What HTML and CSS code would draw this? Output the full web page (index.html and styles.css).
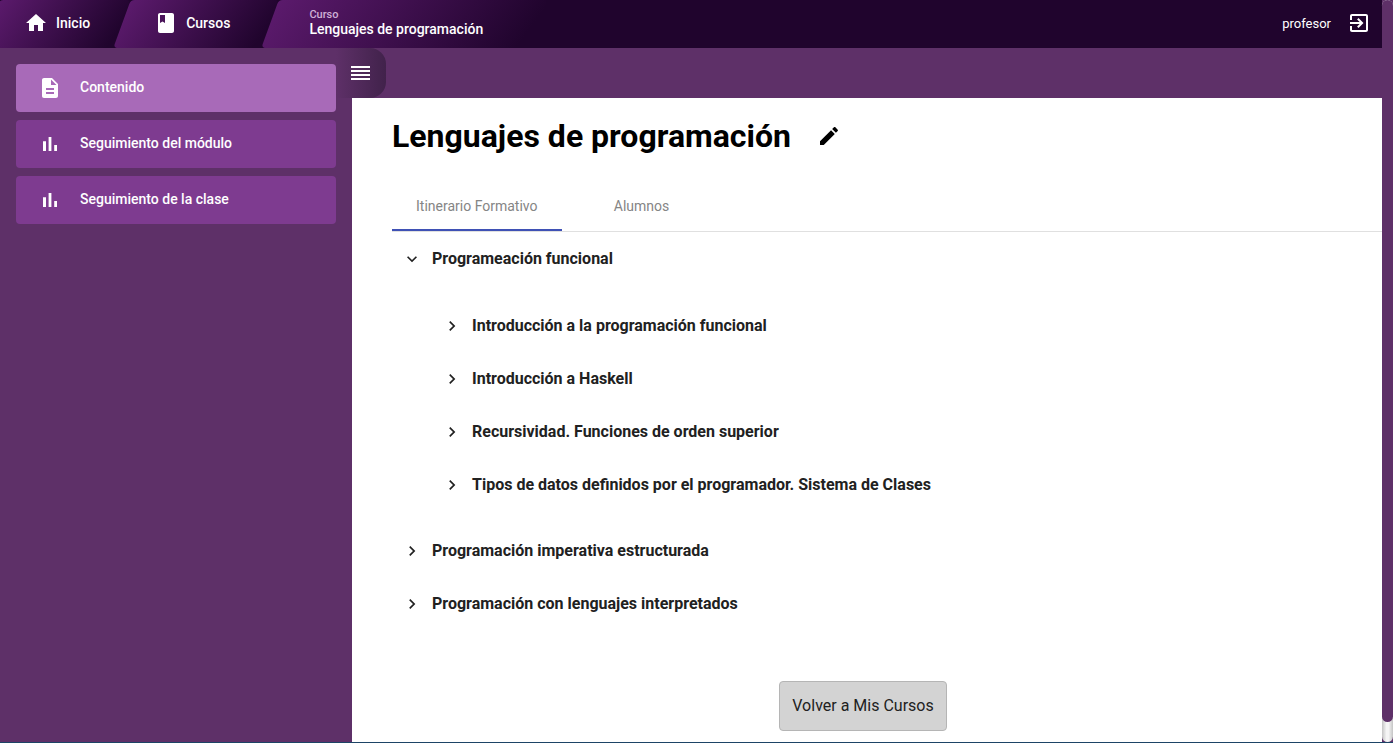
FILE: index.html
```html
<!DOCTYPE html>
<html lang="es">
<head>
<meta charset="utf-8">
<title>Lenguajes de programación</title>
<link rel="stylesheet" href="styles.css">
</head>
<body>
<div class="app">
  <header class="topbar">
    <nav class="crumbs" aria-label="Navegación principal">
      <a class="crumb crumb-home" href="#inicio">
        <svg class="icon" viewBox="0 0 24 24"><path d="M10 20v-6h4v6h5v-8h3L12 3 2 12h3v8z"/></svg>
        <span>Inicio</span>
      </a>
      <a class="crumb crumb-courses" href="#cursos">
        <svg class="icon" viewBox="0 0 24 24"><path d="M18 2H6c-1.100 0-2 .9-2 2v16c0 1.100.9 2 2 2h12c1.100 0 2-.9 2-2V4c0-1.100-.9-2-2-2zM6 4h5v8l-2.500-1.500L6 12V4z"/></svg>
        <span>Cursos</span>
      </a>
      <a class="crumb crumb-current" href="#curso">
        <span class="crumb-kind">Curso</span>
        <span>Lenguajes de programación</span>
      </a>
    </nav>
    <div class="user">
      <span>profesor</span>
      <button class="icon-button" type="button" aria-label="Cerrar sesión">
        <svg class="icon" viewBox="0 0 24 24"><path d="M10.090 15.590L11.500 17l5-5-5-5-1.410 1.410L12.670 11H3v2h9.670l-2.580 2.590zM19 3H5c-1.110 0-2 .9-2 2v4h2V5h14v14H5v-4H3v4c0 1.100.89 2 2 2h14c1.100 0 2-.9 2-2V5c0-1.100-.9-2-2-2z"/></svg>
      </button>
    </div>
  </header>

  <aside class="sidebar">
    <nav class="menu" aria-label="Secciones del curso">
      <a class="menu-item active" href="#contenido">
        <svg class="icon" viewBox="0 0 24 24"><path d="M14 2H6c-1.100 0-2 .9-2 2v16c0 1.100.89 2 2 2h12c1.100 0 2-.9 2-2V8l-6-6zm2 16H8v-2h8v2zm0-4H8v-2h8v2zm-3-5V3.500L18.500 9H13z"/></svg>
        <span>Contenido</span>
      </a>
      <a class="menu-item" href="#modulo">
        <svg class="icon" viewBox="0 0 24 24"><path d="M5 9.200h3V19H5zM10.600 5h2.800v14h-2.800zm5.600 8H19v6h-2.800z"/></svg>
        <span>Seguimiento del módulo</span>
      </a>
      <a class="menu-item" href="#clase">
        <svg class="icon" viewBox="0 0 24 24"><path d="M5 9.200h3V19H5zM10.600 5h2.800v14h-2.800zm5.600 8H19v6h-2.800z"/></svg>
        <span>Seguimiento de la clase</span>
      </a>
    </nav>
    <button class="toggle" type="button" aria-label="Ocultar menú">
      <svg class="toggle-icon" viewBox="0 0 20 14"><path d="M0 0h19v2H0zM0 4h19v2H0zM0 8h19v2H0zM0 12h19v2H0z"/></svg>
    </button>
  </aside>

  <main class="content">
    <div class="heading">
      <h1>Lenguajes de programación</h1>
      <button class="icon-button" type="button" aria-label="Editar título">
        <svg class="icon" viewBox="0 0 24 24"><path d="M3 17.250V21h3.750L17.810 9.940l-3.750-3.750L3 17.250zM20.710 7.040c.39-.39.39-1.020 0-1.410l-2.340-2.340c-.39-.39-1.020-.39-1.410 0l-1.830 1.830 3.750 3.750 1.830-1.830z"/></svg>
      </button>
    </div>
    <div class="tabs" role="tablist">
      <button class="tab selected" type="button" role="tab" aria-selected="true">Itinerario Formativo</button>
      <button class="tab" type="button" role="tab" aria-selected="false">Alumnos</button>
    </div>
    <ul class="tree">
      <li>
        <button class="node" type="button" aria-expanded="true"><svg class="chevron" viewBox="0 0 24 24"><path d="M16.590 8.590L12 13.170 7.410 8.590 6 10l6 6 6-6z"/></svg>Programeación funcional</button>
        <ul class="subtree">
          <li><button class="node" type="button" aria-expanded="false"><svg class="chevron" viewBox="0 0 24 24"><path d="M10 6L8.590 7.410 13.170 12l-4.580 4.590L10 18l6-6z"/></svg>Introducción a la programación funcional</button></li>
          <li><button class="node" type="button" aria-expanded="false"><svg class="chevron" viewBox="0 0 24 24"><path d="M10 6L8.590 7.410 13.170 12l-4.580 4.590L10 18l6-6z"/></svg>Introducción a Haskell</button></li>
          <li><button class="node" type="button" aria-expanded="false"><svg class="chevron" viewBox="0 0 24 24"><path d="M10 6L8.590 7.410 13.170 12l-4.580 4.590L10 18l6-6z"/></svg>Recursividad. Funciones de orden superior</button></li>
          <li><button class="node" type="button" aria-expanded="false"><svg class="chevron" viewBox="0 0 24 24"><path d="M10 6L8.590 7.410 13.170 12l-4.580 4.590L10 18l6-6z"/></svg>Tipos de datos definidos por el programador. Sistema de Clases</button></li>
        </ul>
      </li>
      <li><button class="node" type="button" aria-expanded="false"><svg class="chevron" viewBox="0 0 24 24"><path d="M10 6L8.590 7.410 13.170 12l-4.580 4.590L10 18l6-6z"/></svg>Programación imperativa estructurada</button></li>
      <li><button class="node" type="button" aria-expanded="false"><svg class="chevron" viewBox="0 0 24 24"><path d="M10 6L8.590 7.410 13.170 12l-4.580 4.590L10 18l6-6z"/></svg>Programación con lenguajes interpretados</button></li>
    </ul>
    <div class="actions">
      <button class="back" type="button">Volver a Mis Cursos</button>
    </div>
  </main>

  <div class="scroll-track"><div class="scroll-thumb"></div></div>
</div>
</body>
</html>
```

FILE: styles.css
```css
* {
  box-sizing: border-box;
}

body {
  margin: 0;
  font-family: Roboto, "Liberation Sans", sans-serif;
  font-size: 14px;
  color: #212121;
  background: #5e3068;
}

button {
  margin: 0;
  padding: 0;
  border: 0;
  background: none;
  font: inherit;
  color: inherit;
  cursor: pointer;
}

a {
  color: inherit;
  text-decoration: none;
}

ul {
  margin: 0;
  padding: 0;
  list-style: none;
}

svg {
  display: block;
  flex: none;
  fill: currentColor;
}

.icon {
  width: 24px;
  height: 24px;
}

.app {
  display: grid;
  grid-template-columns: 352px 1fr 11px;
  grid-template-rows: 48px 1fr;
  min-height: 100vh;
  border-bottom: 1px solid #1d4466;
}

/* Top bar */

.topbar {
  grid-column: 1 / 3;
  display: flex;
  justify-content: space-between;
  overflow: hidden;
  color: #fff;
  background: #20042d;
}

.crumbs {
  display: flex;
  font-weight: 500;
}

.crumb {
  position: relative;
  z-index: 0;
  display: flex;
  align-items: center;
  padding-bottom: 2px;
}

.crumb::before {
  content: "";
  position: absolute;
  inset: 0;
  z-index: -1;
  border-radius: 4px;
  background: linear-gradient(110deg, #5b1a6c, #20042d 95%);
  transform: skewX(-20deg);
}

.crumb-home {
  gap: 8px;
  padding-left: 24px;
  padding-right: 32px;
}

.crumb-home::before {
  left: -9px;
}

.crumb-courses {
  gap: 8px;
  padding-left: 32px;
  padding-right: 40px;
}

.crumb-current {
  flex-direction: column;
  align-items: flex-start;
  justify-content: center;
  padding: 0 56px 3px 39px;
  line-height: 16px;
}

.crumb-kind {
  font-size: 11px;
  line-height: 12px;
  color: #cfb0d6;
}

.user {
  display: flex;
  align-items: center;
  gap: 16px;
  padding: 0 11px 2px 0;
  font-size: 13px;
}

/* Side menu */

.sidebar {
  position: relative;
  padding: 16px;
}

.menu {
  display: flex;
  flex-direction: column;
  gap: 8px;
}

.menu-item {
  display: flex;
  align-items: center;
  gap: 18px;
  height: 48px;
  padding: 0 22px;
  border-radius: 4px;
  font-weight: 500;
  color: #fff;
  background: #7e3b90;
}

.menu-item span {
  padding-bottom: 2px;
}

.menu-item.active {
  background: #a86ab8;
}

.toggle {
  position: absolute;
  top: 0;
  left: 336px;
  width: 50px;
  height: 50px;
  padding-left: 15px;
  border-radius: 0 16px 16px 0;
  color: #fff;
  background: linear-gradient(90deg, #5e3068, #41224b);
}

.toggle-icon {
  width: 20px;
  height: 14px;
}

/* Course content */

.content {
  margin-top: 50px;
  padding-left: 40px;
  background: #fff;
}

.heading {
  display: flex;
  align-items: center;
  gap: 26px;
  padding-top: 18px;
  color: #000;
}

h1 {
  margin: 0;
  font-size: 32px;
  line-height: 40px;
  font-weight: 700;
}

.tabs {
  display: flex;
  margin-top: 26px;
  border-bottom: 1px solid #e0e0e0;
}

.tab {
  min-width: 160px;
  height: 49px;
  padding: 0 24px;
  border-bottom: 2px solid transparent;
  color: #858585;
}

.tab.selected {
  border-bottom-color: #3f51b5;
}

.tree {
  font-size: 16px;
  font-weight: 700;
}

.node {
  display: flex;
  align-items: center;
  gap: 10px;
  height: 53px;
  padding-left: 10px;
}

.chevron {
  width: 20px;
  height: 20px;
}

.subtree {
  padding: 14px 0 13px 40px;
}

.actions {
  display: flex;
  justify-content: center;
  padding: 51px 48px 11px 0;
}

.back {
  height: 50px;
  padding: 0 12px 2px;
  border: 1px solid #b5b5b5;
  border-radius: 4px;
  font-size: 16px;
  background: #d3d3d3;
}

/* Scroll indicator */

.scroll-track {
  grid-column: 3;
  grid-row: 1 / 3;
  display: flex;
  border-radius: 6px;
  background: linear-gradient(90deg, #c4c4c4, #f5f5f5 40%, #f5f5f5 60%, #c4c4c4);
}

.scroll-thumb {
  flex: 1;
  margin-bottom: 20px;
  border-radius: 6px;
  background: #5e3068;
}
```
